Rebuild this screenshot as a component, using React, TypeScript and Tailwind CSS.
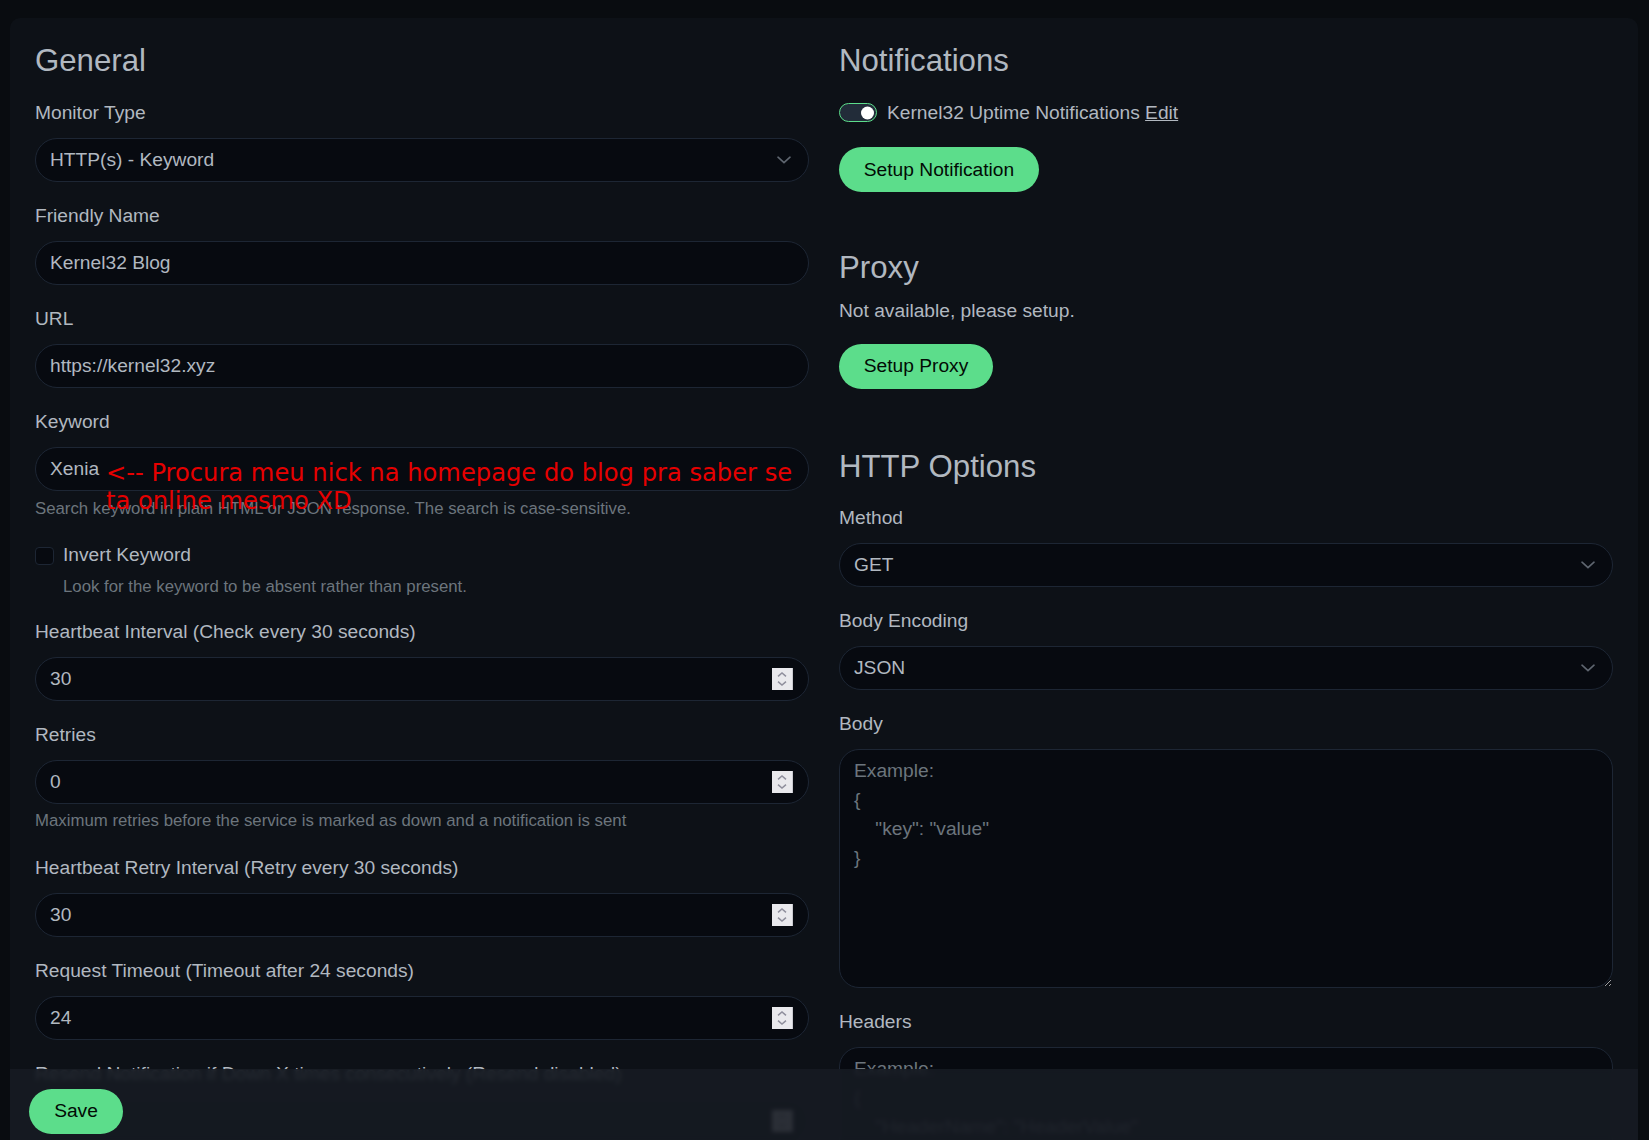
import React from 'react'

const labelCls = 'block text-[19.2px] leading-[28.8px] text-[#b1b8c0] mb-[10.2px]'
const inputCls =
    'w-full h-[44px] rounded-full border border-[#1d2634] bg-[#070a10] px-[14px] text-[19.2px] text-[#b1b8c0] outline-none'
const helpCls = 'text-[16.8px] leading-[24px] text-[#6c757d]'
const headingCls = 'text-[31.2px] leading-[38.4px] text-[#b1b8c0] font-normal'
const btnCls = 'h-[45px] rounded-full bg-[#5cdd8b] text-[19.2px] text-[#020b05] flex items-center justify-center'
const areaCls =
    'block w-full h-[239px] rounded-[20px] border border-[#1d2634] bg-[#070a10] px-[14px] pt-[7px] text-[19.2px] leading-[28.8px] text-[#b1b8c0] placeholder:text-[#6c757d] outline-none'

function Chevron() {
    return (
        <svg
            className="absolute right-[18px] top-1/2 -translate-y-1/2 pointer-events-none"
            width="14"
            height="8"
            viewBox="0 0 14 8"
        >
            <path d="M1 1.2 L7 6.6 L13 1.2" stroke="#5f6670" strokeWidth="1.6" fill="none" strokeLinecap="round" />
        </svg>
    )
}

function Spinner() {
    return (
        <div className="absolute right-[16px] top-1/2 -translate-y-1/2 w-[21px] h-[22px] bg-[#e9e9ed] border-r border-[#c9c9cf] flex flex-col items-center justify-center gap-[4px]">
            <svg width="10" height="5" viewBox="0 0 10 5">
                <path d="M1 4.3 L5 1 L9 4.3" stroke="#8f8f9d" strokeWidth="1.5" fill="none" />
            </svg>
            <svg width="10" height="5" viewBox="0 0 10 5">
                <path d="M1 0.7 L5 4 L9 0.7" stroke="#8f8f9d" strokeWidth="1.5" fill="none" />
            </svg>
        </div>
    )
}

function SelectField({ label, value }: { label: string; value: string }) {
    return (
        <div className="mb-[20px]">
            <label className={labelCls}>{label}</label>
            <div className="relative">
                <select className={inputCls + ' appearance-none'} defaultValue={value}>
                    <option>{value}</option>
                </select>
                <Chevron />
            </div>
        </div>
    )
}

function TextField({ label, value, number }: { label: string; value: string; number?: boolean }) {
    return (
        <div>
            <label className={labelCls}>{label}</label>
            <div className="relative">
                <input type="text" className={inputCls} defaultValue={value} />
                {number && <Spinner />}
            </div>
        </div>
    )
}

export default function App() {
    return (
        <div className="relative h-[1140px] overflow-hidden bg-[#090c10] font-['Liberation_Sans',Arial,sans-serif] pt-[18px]">
            <div className="ml-[10px] w-[1628px] rounded-[10px] bg-[#0d1117] px-[25px] pt-[24px] pb-[60px] grid grid-cols-2 gap-x-[30px] items-start">
                {/* left column */}
                <div className="flex flex-col">
                    <h2 className={headingCls + ' mb-[19px]'}>General</h2>
                    <SelectField label="Monitor Type" value="HTTP(s) - Keyword" />
                    <div className="mb-[20px]">
                        <TextField label="Friendly Name" value="Kernel32 Blog" />
                    </div>
                    <div className="mb-[20px]">
                        <TextField label="URL" value="https://kernel32.xyz" />
                    </div>
                    <div>
                        <label className={labelCls}>Keyword</label>
                        <div className="relative">
                            <input type="text" className={inputCls} defaultValue="Xenia" />
                            <div className="absolute left-[71px] top-[12px] z-10 whitespace-nowrap font-['DejaVu_Sans',sans-serif] text-[24.2px] leading-[28px] text-[#e60000]">
                                &lt;-- Procura meu nick na homepage do blog pra saber se
                                <br />
                                ta online mesmo XD
                            </div>
                        </div>
                        <div className={helpCls + ' mt-[6px]'}>
                            Search keyword in plain HTML or JSON response. The search is case-sensitive.
                        </div>
                    </div>
                    <div className="mt-[21px] flex items-center h-[27px]">
                        <span className="w-[19px] h-[18px] rounded-[4px] border border-[#1d2634] bg-[#070a10]" />
                        <span className="ml-[9px] text-[19.2px] text-[#b1b8c0]">Invert Keyword</span>
                    </div>
                    <div className={helpCls + ' mt-[6px] ml-[28px]'}>
                        Look for the keyword to be absent rather than present.
                    </div>
                    <div className="mt-[19px] mb-[20px]">
                        <TextField label="Heartbeat Interval (Check every 30 seconds)" value="30" number />
                    </div>
                    <TextField label="Retries" value="0" number />
                    <div className={helpCls + ' mt-[5px]'}>
                        Maximum retries before the service is marked as down and a notification is sent
                    </div>
                    <div className="mt-[21px] mb-[20px]">
                        <TextField label="Heartbeat Retry Interval (Retry every 30 seconds)" value="30" number />
                    </div>
                    <div className="mb-[20px]">
                        <TextField label="Request Timeout (Timeout after 24 seconds)" value="24" number />
                    </div>
                    <TextField
                        label="Resend Notification if Down X times consecutively (Resend disabled)"
                        value="0"
                        number
                    />
                </div>

                {/* right column */}
                <div className="flex flex-col">
                    <h2 className={headingCls + ' mb-[19px]'}>Notifications</h2>
                    <div className="flex items-center h-[27px]">
                        <span className="relative w-[38px] h-[19px] rounded-full border border-[#5cdd8b] bg-[#222c39]">
                            <span className="absolute right-[2px] top-1/2 -translate-y-1/2 w-[13px] h-[13px] rounded-full bg-white" />
                        </span>
                        <span className="ml-[10px] text-[19.2px] text-[#b1b8c0]">
                            Kernel32 Uptime Notifications <span className="underline">Edit</span>
                        </span>
                    </div>
                    <button className={btnCls + ' mt-[21px] w-[200px]'}>Setup Notification</button>

                    <h2 className={headingCls + ' mt-[57px]'}>Proxy</h2>
                    <div className="mt-[9px] text-[19.2px] leading-[27px] text-[#b1b8c0]">Not available, please setup.</div>
                    <button className={btnCls + ' mt-[20px] w-[154px]'}>Setup Proxy</button>

                    <h2 className={headingCls + ' mt-[59px] mb-[18px]'}>HTTP Options</h2>
                    <SelectField label="Method" value="GET" />
                    <SelectField label="Body Encoding" value="JSON" />
                    <div className="mb-[20px]">
                        <label className={labelCls}>Body</label>
                        <textarea className={areaCls} placeholder={'Example:\n{\n    "key": "value"\n}'} />
                    </div>
                    <div>
                        <label className={labelCls}>Headers</label>
                        <textarea className={areaCls} placeholder={'Example:\n{\n    "HeaderName": "HeaderValue"\n}'} />
                    </div>
                </div>
            </div>

            {/* sticky bottom bar */}
            <div className="absolute left-[10px] top-[1069px] w-[1628px] h-[71px] bg-[#161b22]/90 backdrop-blur-[2px] pl-[19px] pt-[20px]">
                <button className={btnCls + ' w-[94px]'}>Save</button>
            </div>
        </div>
    )
}
